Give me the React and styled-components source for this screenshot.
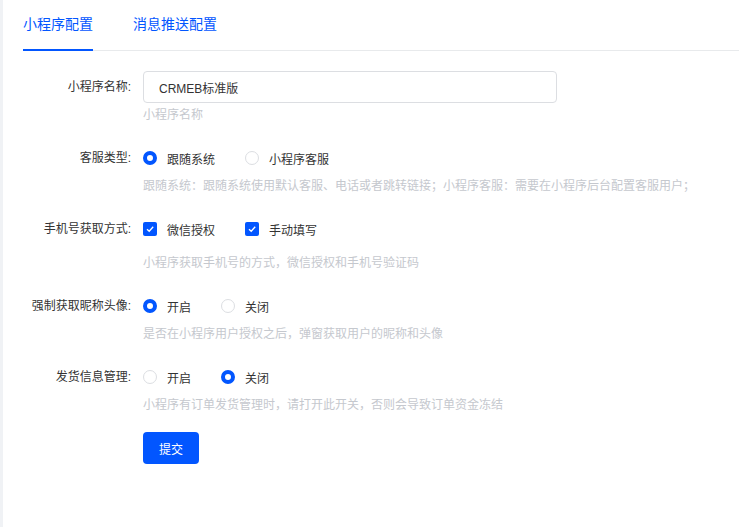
import React, { useState } from "react";
import styled, { createGlobalStyle } from "styled-components";

const BLUE = "#0256ff";

const Global = createGlobalStyle`
  html, body { margin: 0; padding: 0; height: 100%; }
  body {
    background: #f0f2f5;
    font-family: "Liberation Sans", "Noto Sans CJK SC", sans-serif;
    font-size: 12px;
    color: #333;
  }
  #root { height: 100%; }
`;

const Page = styled.div`
  margin-left: 3px;
  min-height: 527px;
  background: #fff;
  box-sizing: border-box;
`;

const TabBar = styled.div`
  display: flex;
  margin-left: 20px;
  height: 51px;
  border-bottom: 1px solid #e8eaec;
  box-sizing: border-box;
`;

const Tab = styled.div`
  position: relative;
  font-size: 14px;
  line-height: 48px;
  color: ${BLUE};
  margin-right: 40px;
  cursor: pointer;
  &::after {
    content: "";
    position: absolute;
    left: 0;
    right: 0;
    bottom: -1px;
    height: 2px;
    background: ${(p) => (p.$active ? BLUE : "transparent")};
  }
`;

const Form = styled.div`
  padding-top: 20px;
  display: flex;
  flex-direction: column;
  gap: 19px;
`;

const Item = styled.div`
  display: grid;
  grid-template-columns: 140px 1fr;
`;

const Label = styled.div`
  text-align: right;
  padding-right: 12px;
  line-height: 32px;
  color: #333;
  white-space: nowrap;
`;

const Control = styled.div`
  display: flex;
  flex-direction: column;
`;

const Line = styled.div`
  display: flex;
  align-items: center;
  height: 32px;
`;

const Input = styled.input`
  width: 414px;
  height: 32px;
  box-sizing: border-box;
  border: 1px solid #dcdee2;
  border-radius: 4px;
  padding: 0 15px;
  font: inherit;
  font-size: 12px;
  color: #333;
  outline: none;
`;

const Hint = styled.div`
  margin-top: ${(p) => p.$gap || 4}px;
  line-height: 16px;
  color: #c5c8ce;
  font-size: 12px;
`;

const Option = styled.label`
  display: flex;
  align-items: center;
  margin-right: 30px;
  cursor: pointer;
  color: #333;
`;

const RadioDot = styled.span`
  width: 14px;
  height: 14px;
  box-sizing: border-box;
  border-radius: 50%;
  border: ${(p) => (p.$on ? `4px solid ${BLUE}` : "1px solid #dcdee2")};
  background: #fff;
  margin-right: 10px;
  flex-shrink: 0;
`;

const Box = styled.span`
  width: 14px;
  height: 14px;
  box-sizing: border-box;
  border-radius: 2px;
  background: ${BLUE};
  margin-right: 10px;
  display: flex;
  align-items: center;
  justify-content: center;
  flex-shrink: 0;
`;

const Button = styled.button`
  width: 56px;
  height: 32px;
  border: none;
  border-radius: 4px;
  background: ${BLUE};
  color: #fff;
  font: inherit;
  font-size: 12px;
  cursor: pointer;
`;

function Radios({ options, value }) {
  return (
    <Line>
      {options.map((o, i) => (
        <Option key={o}>
          <RadioDot $on={i === value} />
          {o}
        </Option>
      ))}
    </Line>
  );
}

function Checks({ options }) {
  return (
    <Line>
      {options.map((o) => (
        <Option key={o}>
          <Box>
            <svg width="10" height="10" viewBox="0 0 10 10">
              <polyline points="2,5.2 4.2,7.3 8.2,2.8" fill="none" stroke="#fff" strokeWidth="1.3" />
            </svg>
          </Box>
          {o}
        </Option>
      ))}
    </Line>
  );
}

export default function App() {
  const [name, setName] = useState("CRMEB标准版");
  return (
    <>
      <Global />
      <Page>
        <TabBar>
          <Tab $active>小程序配置</Tab>
          <Tab>消息推送配置</Tab>
        </TabBar>
        <Form>
          <Item>
            <Label>小程序名称:</Label>
            <Control>
              <Input value={name} onChange={(e) => setName(e.target.value)} />
              <Hint>小程序名称</Hint>
            </Control>
          </Item>
          <Item>
            <Label>客服类型:</Label>
            <Control>
              <Radios options={["跟随系统", "小程序客服"]} value={0} />
              <Hint>跟随系统：跟随系统使用默认客服、电话或者跳转链接；小程序客服：需要在小程序后台配置客服用户；</Hint>
            </Control>
          </Item>
          <Item>
            <Label>手机号获取方式:</Label>
            <Control>
              <Checks options={["微信授权", "手动填写"]} />
              <Hint $gap={10}>小程序获取手机号的方式，微信授权和手机号验证码</Hint>
            </Control>
          </Item>
          <Item>
            <Label>强制获取昵称头像:</Label>
            <Control>
              <Radios options={["开启", "关闭"]} value={0} />
              <Hint>是否在小程序用户授权之后，弹窗获取用户的昵称和头像</Hint>
            </Control>
          </Item>
          <Item>
            <Label>发货信息管理:</Label>
            <Control>
              <Radios options={["开启", "关闭"]} value={1} />
              <Hint>小程序有订单发货管理时，请打开此开关，否则会导致订单资金冻结</Hint>
            </Control>
          </Item>
          <Item>
            <Label />
            <Control>
              <div>
                <Button>提交</Button>
              </div>
            </Control>
          </Item>
        </Form>
      </Page>
    </>
  );
}
